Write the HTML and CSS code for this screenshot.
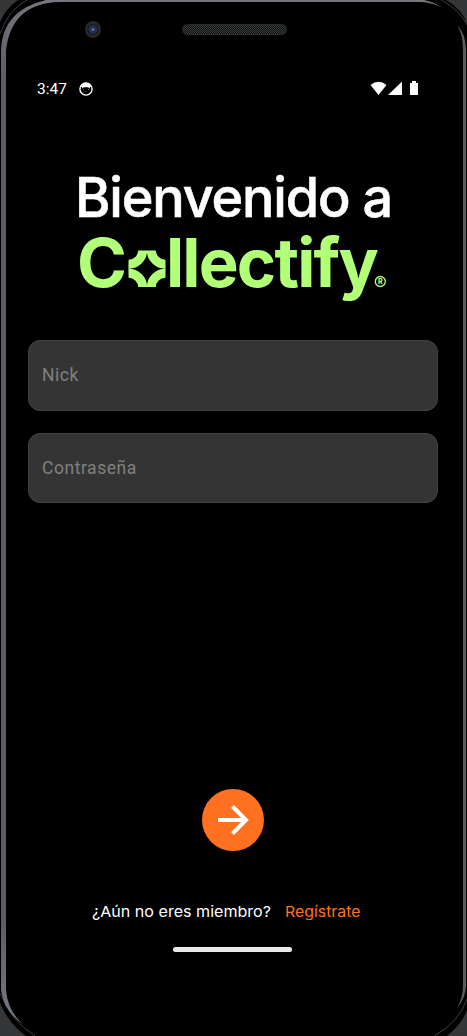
FILE: index.html
```html
<!DOCTYPE html>
<html lang="es">
<head>
<meta charset="utf-8">
<title>Collectify</title>
<link rel="stylesheet" href="styles.css">
</head>
<body>
<main class="phone">
  <svg class="frame" viewBox="0 0 467 1036" aria-hidden="true">
    <defs>
      <linearGradient id="edge" x1="0" y1="0" x2="0" y2="1">
        <stop offset="0" stop-color="#74767c"/>
        <stop offset=".08" stop-color="#5b5c64"/>
        <stop offset=".9" stop-color="#5b5c64"/>
        <stop offset="1" stop-color="#777b84"/>
      </linearGradient>
    </defs>
    <path fill="#353638" d="M0 0H18Q6 8 0 22ZM467 0H446Q462 9 467 24ZM0 1003Q9 1024 26 1036H0ZM467 1010Q462 1024 447 1036H467Z"/>
    <path fill="none" stroke="#3c3d3f" d="M0 34Q8 10 27 0M467 25Q459 9 441 0M0 993Q10 1020 35 1036M467 999Q459 1022 435 1035.500"/>
    <path fill="url(#edge)" d="M1 990V49Q3 10 46 0H198L424 0Q434 2 443 8Q434 3 422 2H60Q11 3 6 51V990Q8 1012 23 1024Q4 1012 1 990Z"/>
    <path fill="#5b5a61" d="M457 25Q463 34 463 50V985Q463 998 457 1008Q466 998 466 985V50Q466 34 457 25Z"/>
  </svg>

  <header class="hardware">
    <span class="camera"></span>
    <span class="speaker"></span>
  </header>

  <div class="status">
    <span class="clock">3:47</span>
    <svg class="cat" viewBox="0 0 14 14"><circle cx="7" cy="7" r="6.100" fill="#000" stroke="#fff" stroke-width="1.400"/><path fill="#fff" d="M1.500 4.500Q3 .8 7 .8T12.500 4.500L11 5 10.800 6.500 9.200 5.300H4.800L3.200 6.500 3 5Z"/><path fill="#555" d="M4 7h1v1H4zM9 7h1v1H9zM6.500 9h1v1h-1z"/></svg>
    <svg class="signals" viewBox="0 0 50 16"><path fill="#fff" d="M.500 4Q8.500-2.500 16.500 4L8.500 14ZM18 14 32 .500V14ZM40 2h2V0h4v2h2v12h-8Z"/></svg>
  </div>

  <svg class="title" viewBox="0 0 467 140" role="img" aria-label="Bienvenido a Collectify">
    <text class="welcome" x="75" y="51.500" textLength="317" lengthAdjust="spacingAndGlyphs">Bienvenido a</text>
    <text class="brand" x="77" y="121.500" textLength="50" lengthAdjust="spacingAndGlyphs">C</text>
    <g class="spark">
      <path d="M128.500 99.200A14 14 0 0 0 142.700 85.500M151.300 85.500A14 14 0 0 0 165.500 99.200M165.500 108.300A14 14 0 0 0 151.300 122M142.700 122A14 14 0 0 0 128.500 108.300"/>
    </g>
    <text class="brand tight" x="166" y="121.500" textLength="211" lengthAdjust="spacingAndGlyphs">llectify</text>
    <circle class="ring" cx="380.300" cy="116.500" r="5"/>
    <text class="registered" x="378" y="119">R</text>
  </svg>

  <form class="fields">
    <div class="field">Nick</div>
    <div class="field">Contraseña</div>
  </form>

  <div class="go">
    <svg viewBox="0 0 62 62"><path d="M16 31H44M30.500 17.500 44 31 30.500 44.500"/></svg>
  </div>

  <svg class="signup" viewBox="0 0 467 30">
    <text x="92" y="20" textLength="179" lengthAdjust="spacingAndGlyphs">¿Aún no eres miembro?</text>
    <text class="link" x="285" y="20" textLength="75.500" lengthAdjust="spacingAndGlyphs">Regístrate</text>
  </svg>
  <div class="home"></div>
</main>
</body>
</html>
```

FILE: styles.css
```css
* { box-sizing: border-box; }
body { margin: 0; background: #000; }
svg { display: block; }
.phone {
  position: relative;
  width: 467px;
  height: 1036px;
  overflow: hidden;
  background: #000;
  color: #fff;
  font-family: Roboto, sans-serif;
  display: flex;
  flex-direction: column;
}
.frame { position: absolute; inset: 0; width: 467px; height: 1036px; }
.hardware {
  height: 78px;
  padding: 21px 0 0 85px;
  display: flex;
  align-items: flex-start;
  gap: 81px;
}
.camera {
  width: 16px;
  height: 17px;
  border-radius: 50%;
  background: radial-gradient(circle at 50% 50%, #5d6c99 0 1px, #222e54 2px 4px, #111318 5px, #29292b 6px 8px);
}
.speaker {
  width: 105px;
  height: 11px;
  margin-top: 3px;
  border: 1px solid #292a2a;
  border-radius: 6px;
  background: repeating-conic-gradient(#101111 0 25%, #393b3b 0 50%) 0 0 / 2px 2px;
}
.status { display: flex; height: 22px; padding-left: 37px; align-items: center; }
.clock { width: 41.5px; font-size: 15.5px; line-height: 22px; }
.cat { width: 14px; height: 14px; }
.signals { width: 50px; height: 16px; margin: 0 0 0 277.5px; }
.title { width: 467px; height: 140px; margin-top: 65px; font-family: Inter, sans-serif; }
.welcome { fill: #fff; stroke: #fff; stroke-width: .6px; font-size: 54.5px; font-weight: 500; letter-spacing: -1.2px; }
.brand { fill: #b2ff78; font-size: 67px; font-weight: 700; }
.tight { letter-spacing: -1.8px; }
.spark { fill: none; stroke: #b2ff78; stroke-width: 9px; }
.ring { fill: none; stroke: #b2ff78; stroke-width: 1.3px; }
.registered { fill: #b2ff78; font-size: 7px; font-weight: 800; }
.fields { display: flex; flex-direction: column; gap: 22px; margin: 35px 29px 0 28px; }
.field {
  height: 70.500px;
  padding-left: 13px;
  border: 1px solid #43433f;
  border-radius: 12px;
  background: #343434;
  color: #808080;
  font-size: 17.5px;
  line-height: 68px;
  letter-spacing: .55px;
}
.go { width: 62px; height: 62px; margin: 286px 0 0 202px; border-radius: 50%; background: #ff7121; }
.go path { fill: none; stroke: #fff; stroke-width: 4px; }
.signup { width: 467px; height: 30px; margin-top: 45.5px; font-family: Inter, sans-serif; font-size: 15px; fill: #fff; }
.link { fill: #ff7121; }
.home { width: 119px; height: 5px; margin: 20.5px 0 0 173px; border-radius: 3px; background: #e9e9e9; }
```
